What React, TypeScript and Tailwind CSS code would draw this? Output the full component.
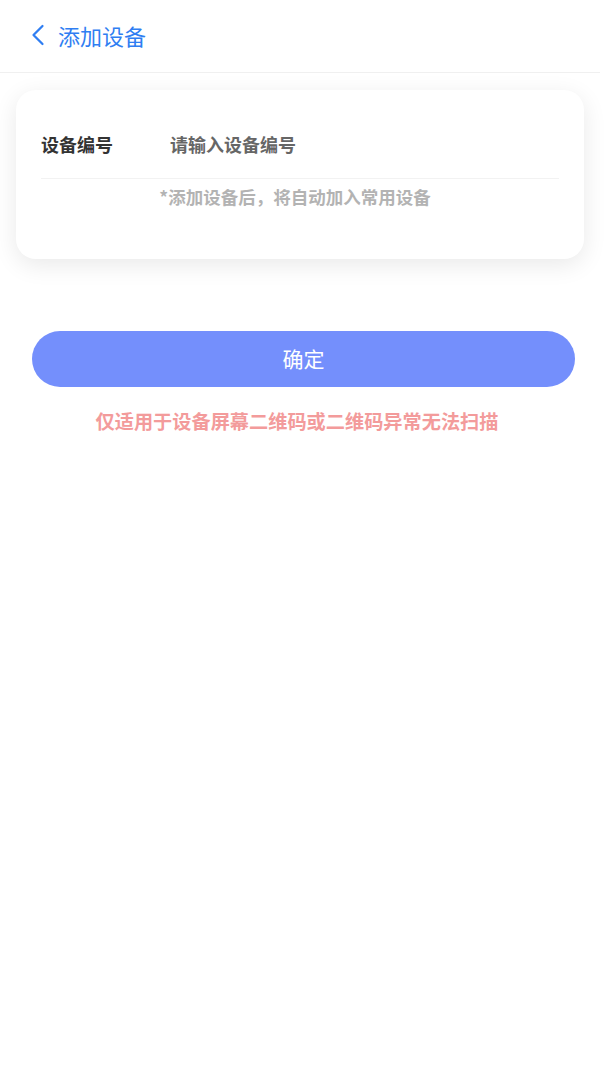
import { ChevronLeft } from 'lucide-react';

const font = { fontFamily: '"Noto Sans CJK SC", "Noto Sans", sans-serif' };

export default function App() {
  return (
    <div className="w-[600px] min-h-[1080px] bg-white" style={font}>
      {/* Header */}
      <div className="h-[73px] flex items-center pl-[20px] pb-[3px] border-b border-[#f0f0f0]">
        <ChevronLeft className="size-[36px] text-[#2f7ef2]" strokeWidth={1.5} />
        <span className="ml-[2px] text-[22px] text-[#2f7ef2] leading-none">添加设备</span>
      </div>

      {/* Card */}
      <div className="mx-4 mt-[17px] h-[169px] rounded-[20px] bg-white shadow-[0_6px_24px_rgba(0,0,0,0.09)] px-[25px] pt-[42px]">
        <div className="flex items-center h-[24px]">
          <span className="w-[129px] text-[18px] font-bold text-[#333333] leading-none">设备编号</span>
          <span className="text-[18px] font-bold text-[#666666] leading-none">请输入设备编号</span>
        </div>
        <div className="mt-[22px] border-t border-[#f2f2f2]" />
        <div className="mt-[6px] pr-[10px] text-center text-[17.5px] font-bold text-[#b3b3b3] leading-[24px]">
          *添加设备后，将自动加入常用设备
        </div>
      </div>

      {/* Button */}
      <button className="ml-8 mt-[72px] w-[543px] h-[56px] rounded-[28px] bg-[#748ffc] text-white text-[21px] flex items-center justify-center">
        确定
      </button>

      <div className="mt-[21px] pr-[6px] text-center text-[19.2px] font-bold text-[#f39b9b] leading-[26px]">
        仅适用于设备屏幕二维码或二维码异常无法扫描
      </div>
    </div>
  );
}
